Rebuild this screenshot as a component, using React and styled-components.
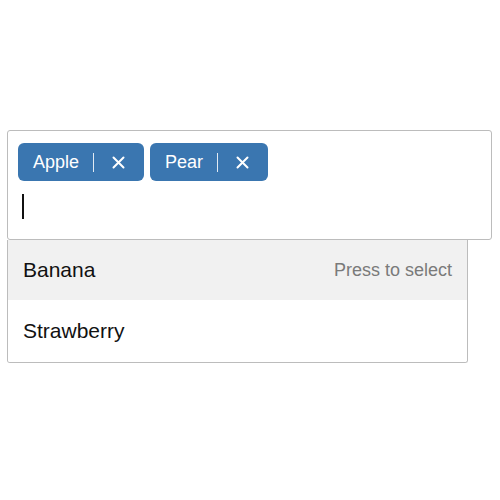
import React from "react";
import styled, { createGlobalStyle } from "styled-components";

const GlobalStyle = createGlobalStyle`
  html, body {
    margin: 0;
    padding: 0;
    background: #fff;
    font-family: "Liberation Sans", Arial, Helvetica, sans-serif;
  }
`;

const Page = styled.div`
  padding: 130px 0 0 7px;
  width: 485px;
`;

const Field = styled.div`
  border: 1px solid #bcbcbc;
  border-radius: 3px;
  padding: 12px 10px 14px;
  background: #fff;
`;

const Tags = styled.div`
  display: flex;
  gap: 6px;
`;

const Tag = styled.div`
  display: flex;
  align-items: center;
  height: 38px;
  padding-left: 15px;
  background: #3a76b0;
  border-radius: 6px;
  color: #fff;
  font-size: 18px;
`;

const TagLabel = styled.span`
  padding-right: 14px;
  border-right: 1px solid rgba(255, 255, 255, 0.85);
  line-height: 19px;
`;

const Remove = styled.button`
  display: flex;
  align-items: center;
  background: none;
  border: none;
  color: #fff;
  padding: 0 19px 0 18px;
  height: 100%;
  cursor: pointer;
`;

const Entry = styled.div`
  display: flex;
  align-items: center;
  height: 38px;
  margin-top: 6px;
  padding-left: 4px;
`;

const Caret = styled.span`
  width: 0;
  height: 25px;
  border-left: 2px solid #111;
`;

const Menu = styled.ul`
  list-style: none;
  margin: 0;
  padding: 0;
  width: 459px;
  border: 1px solid #bcbcbc;
  border-top: none;
  border-radius: 0 0 3px 3px;
  overflow: hidden;
`;

const Option = styled.li`
  display: flex;
  align-items: center;
  justify-content: space-between;
  height: ${({ $last }) => ($last ? "62px" : "60px")};
  padding: 0 15px 0 15px;
  background: ${({ $active }) => ($active ? "#f1f1f1" : "#fff")};
  color: #111;
  font-size: 21px;
`;

const Hint = styled.span`
  color: #7a7a7a;
  font-size: 18px;
`;

const CloseIcon = () => (
  <svg width="13" height="13" viewBox="0 0 13 13">
    <path d="M1.5 1.5 L11.5 11.5 M11.5 1.5 L1.5 11.5" stroke="#fff" strokeWidth="2" strokeLinecap="round" />
  </svg>
);

const App = () => {
  const selected = ["Apple", "Pear"];
  const options = ["Banana", "Strawberry"];

  return (
    <>
      <GlobalStyle />
      <Page>
        <Field>
          <Tags>
            {selected.map((item) => (
              <Tag key={item}>
                <TagLabel>{item}</TagLabel>
                <Remove aria-label={`Remove ${item}`}>
                  <CloseIcon />
                </Remove>
              </Tag>
            ))}
          </Tags>
          <Entry>
            <Caret />
          </Entry>
        </Field>
        <Menu>
          {options.map((item, i) => (
            <Option key={item} $active={i === 0} $last={i === options.length - 1}>
              {item}
              {i === 0 && <Hint>Press to select</Hint>}
            </Option>
          ))}
        </Menu>
      </Page>
    </>
  );
};

export default App;
